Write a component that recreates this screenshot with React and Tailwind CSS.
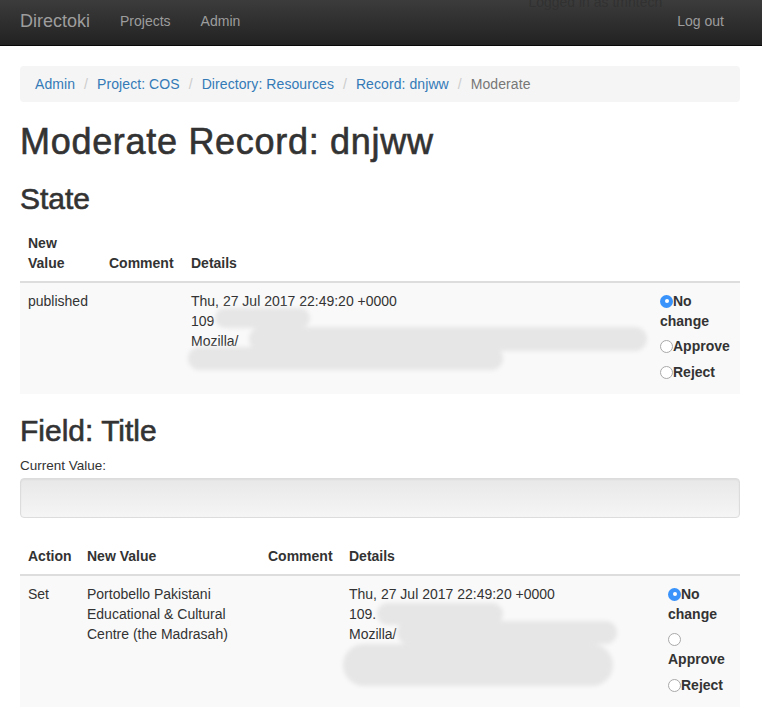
import React from 'react';

const Radio = ({ checked }) =>
  checked ? (
    <span className="inline-block w-[13px] h-[13px] rounded-full bg-[#3a93fb] align-[-2px]">
      <span className="block w-[4px] h-[4px] rounded-full bg-white mx-auto mt-[4.5px]" />
    </span>
  ) : (
    <span className="inline-block w-[13px] h-[13px] rounded-full border border-[#a9a9a9] bg-white align-[-2px]" />
  );

const Choices = () => (
  <div className="font-bold leading-5 pb-[4px]">
    <div>
      <Radio checked />
      <wbr />
      No change
    </div>
    <div className="mt-[5px]">
      <Radio />
      <wbr />
      Approve
    </div>
    <div className="mt-[6px]">
      <Radio />
      <wbr />
      Reject
    </div>
  </div>
);

// grey smudges that hide the address / user agent
const Smudge = ({ id, blobs, width }) => (
  <svg className="absolute -left-[10px] top-0 overflow-hidden pointer-events-none" width={width} height="110">
    <defs>
      <filter id={id} x="-20%" y="-50%" width="140%" height="200%">
        <feGaussianBlur stdDeviation="2.2" />
      </filter>
    </defs>
    <g filter={`url(#${id})`} fill="#e6e6e6" transform="translate(10 0)">
      {blobs.map((b, i) => (
        <rect key={i} x={b[0]} y={b[1]} width={b[2] - b[0]} height={b[3] - b[1]} rx={(b[3] - b[1]) / 2} />
      ))}
    </g>
  </svg>
);

const Details = ({ ip, id, blobs, width }) => (
  <div className="relative">
    <div>Thu, 27 Jul 2017 22:49:20 +0000</div>
    <div>{ip}</div>
    <div>Mozilla/</div>
    <Smudge id={id} blobs={blobs} width={width} />
  </div>
);

const th = 'text-left align-bottom p-2 font-bold leading-5 border-b-2 border-[#ddd]';
const td = 'p-2 align-top leading-5';
const heading = '[-webkit-text-stroke:0.6px_#333]';

const App = () => {
  const crumbs = ['Admin', 'Project: COS', 'Directory: Resources', 'Record: dnjww'];

  return (
    <div className="min-h-screen overflow-hidden bg-white text-[14px] text-[#333] font-['Liberation_Sans',Arial,sans-serif]">
      {/* Navbar */}
      <div className="h-[46px] flex items-center pb-[3px] bg-linear-to-b from-[#3c3c3c] to-[#222] border-b border-[#080808] text-[#9d9d9d] px-[5px]">
        <span className="px-[15px] text-[18px]">Directoki</span>
        <span className="px-[15px]">Projects</span>
        <span className="px-[15px]">Admin</span>
        <div className="flex-1" />
        <span className="self-start -mt-[8px] text-[#313131]">Logged in as tmhtech</span>
        <span className="px-[15px] mr-[18px]">Log out</span>
      </div>

      <div className="pl-5 pr-[22px]">
        {/* Breadcrumb */}
        <div className="mt-5 mb-5 bg-[#f5f5f5] rounded px-[15px] py-2 leading-5 tracking-[0.08px]">
          {crumbs.map((c, i) => (
            <React.Fragment key={c}>
              {i > 0 && <span className="px-[5px] text-[#ccc]">/{'\u00a0'}</span>}
              <a className="text-[#337ab7]">{c}</a>{' '}
            </React.Fragment>
          ))}
          <span className="px-[5px] text-[#ccc]">/{'\u00a0'}</span>
          <span className="text-[#777]">Moderate</span>
        </div>

        <h1 className={`text-[36px] leading-[1.1] tracking-[0.7px] mb-5 ${heading}`}>Moderate Record: dnjww</h1>

        <h2 className={`text-[30px] leading-[1.1] mb-[10px] ${heading}`}>State</h2>
        <table className="w-full table-fixed border-collapse mb-5">
          <thead>
            <tr>
              <th className={`${th} w-[81px]`}>New Value</th>
              <th className={`${th} w-[82px]`}>Comment</th>
              <th className={th}>Details</th>
              <th className={`${th} w-[88px]`}></th>
            </tr>
          </thead>
          <tbody>
            <tr className="bg-[#f9f9f9]">
              <td className={td}>published</td>
              <td className={td}></td>
              <td className={td}>
                <Details
                  ip="109"
                  id="sm1"
                  width={480}
                  blobs={[
                    [24, 17, 119, 37],
                    [58, 36, 456, 60],
                    [-3, 56, 312, 79],
                  ]}
                />
              </td>
              <td className={td}>
                <Choices />
              </td>
            </tr>
          </tbody>
        </table>

        <h2 className={`text-[30px] leading-[1.1] mb-[10px] ${heading}`}>Field: Title</h2>
        <div className="text-[13.5px] leading-[18px] mb-[3px]">Current Value:</div>
        <div className="h-[40px] mb-5 rounded border border-[#dcdcdc] bg-linear-to-b from-[#e8e8e8] to-[#f5f5f5] shadow-[inset_0_1px_2px_rgba(0,0,0,0.05)]" />

        <table className="w-full table-fixed border-collapse">
          <thead>
            <tr>
              <th className={`${th} w-[59px]`}>Action</th>
              <th className={`${th} w-[181px]`}>New Value</th>
              <th className={`${th} w-[81px]`}>Comment</th>
              <th className={th}>Details</th>
              <th className={`${th} w-[80px]`}></th>
            </tr>
          </thead>
          <tbody>
            <tr className="bg-[#f9f9f9]">
              <td className={td}>Set</td>
              <td className={td}>Portobello Pakistani Educational &amp; Cultural Centre (the Madrasah)</td>
              <td className={td}></td>
              <td className={td}>
                <Details
                  ip="109."
                  id="sm2"
                  width={310}
                  blobs={[
                    [28, 19, 154, 41],
                    [48, 37, 268, 60],
                    [-6, 60, 264, 102],
                  ]}
                />
              </td>
              <td className={td}>
                <Choices />
              </td>
            </tr>
          </tbody>
        </table>
      </div>
    </div>
  );
};

export default App;
